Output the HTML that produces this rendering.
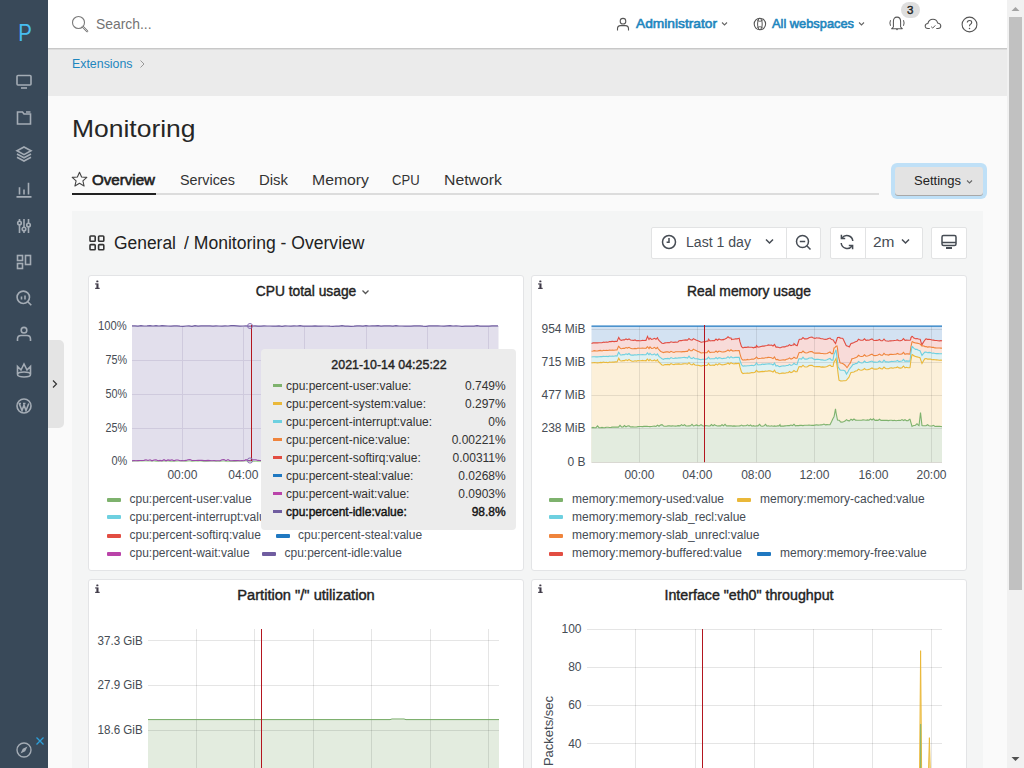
<!DOCTYPE html>
<html><head><meta charset="utf-8"><title>Monitoring</title>
<style>
html,body{margin:0;padding:0;width:1024px;height:768px;overflow:hidden;background:#fafafa;font-family:"Liberation Sans", sans-serif;}
.t{position:absolute;white-space:nowrap;line-height:1;font-family:"Liberation Sans", sans-serif;}
svg{overflow:visible}
</style></head><body>
<div style="position:absolute;left:48px;top:96px;width:960px;height:672px;background:#fafafa"></div><div style="position:absolute;left:48px;top:0px;width:960px;height:48px;background:#fff"></div><div style="position:absolute;left:48px;top:48px;width:960px;height:1px;background:#c8c8c8"></div><div style="position:absolute;left:48px;top:49px;width:960px;height:1px;background:#dcdcdc"></div><div style="position:absolute;left:48px;top:50px;width:960px;height:46px;background:#ebebeb"></div><div style="position:absolute;left:0px;top:0px;width:48px;height:768px;background:#394959"></div><svg style="position:absolute;left:71px;top:15px" width="18" height="18" viewBox="0 0 18 18"><circle cx="7.5" cy="7.5" r="6" fill="none" stroke="#7a7a7a" stroke-width="1.1"/><path d="M11.8 11.8 L16.2 16.2" stroke="#7a7a7a" stroke-width="2.2" stroke-linecap="round"/><path d="M11.8 11.8 L16.2 16.2" stroke="#fff" stroke-width="0.6" stroke-linecap="round"/></svg><div class="t" style="left:96px;transform-origin:left center;transform: scaleX(0.9245);top:15.90px;font-size:15px;color:#737373;font-weight:normal;">Search...</div><div class="t" style="left:24.9px;transform:translateX(-50%) scaleX(0.8492);top:21.08px;font-size:24px;color:#47bdf0;font-weight:normal;">P</div><svg style="position:absolute;left:616px;top:17px" width="14" height="14" viewBox="0 0 14 14"><circle cx="7" cy="4.2" r="2.8" fill="none" stroke="#555" stroke-width="1.1"/><path d="M1.5 13.5 V11.8 Q1.5 8.6 4.5 8.6 H9.5 Q12.5 8.6 12.5 11.8 V13.5" fill="none" stroke="#555" stroke-width="1.1"/></svg><div class="t" style="left:635.5px;transform-origin:left center;transform: scaleX(1.0577);top:17.20px;font-size:13px;color:#1e86be;font-weight:normal;;-webkit-text-stroke:0.6px #1e86be">Administrator</div><svg style="position:absolute;left:721px;top:21px" width="7" height="6" viewBox="0 0 7 6"><path d="M1 1.5 L3.5 4 L6 1.5" fill="none" stroke="#666" stroke-width="1.1"/></svg><svg style="position:absolute;left:752px;top:16px" width="16" height="16" viewBox="0 0 16 16"><circle cx="7.9" cy="8" r="5.7" fill="none" stroke="#555" stroke-width="1.1"/><ellipse cx="7.9" cy="8" rx="2.3" ry="5.7" fill="none" stroke="#555" stroke-width="1"/><path d="M5.2 4.6 Q7.9 6 10.6 4.6 M5.2 11.4 Q7.9 10 10.6 11.4" fill="none" stroke="#555" stroke-width="0.9"/></svg><div class="t" style="left:771.5px;transform-origin:left center;transform: scaleX(0.9867);top:17.20px;font-size:13px;color:#1e86be;font-weight:normal;;-webkit-text-stroke:0.6px #1e86be">All webspaces</div><svg style="position:absolute;left:858px;top:21px" width="7" height="6" viewBox="0 0 7 6"><path d="M1 1.5 L3.5 4 L6 1.5" fill="none" stroke="#666" stroke-width="1.1"/></svg><svg style="position:absolute;left:888px;top:15px" width="18" height="16" viewBox="0 0 18 16"><path d="M5.4 12 V6.6 Q5.4 2.1 9 2.1 Q12.6 2.1 12.6 6.6 V12 L14.3 13.7 H3.7 Z" fill="none" stroke="#555" stroke-width="1.05" stroke-linejoin="round"/><path d="M8.2 14.6 H9.8" stroke="#555" stroke-width="1"/><path d="M2.5 5.2 Q1.3 8 2.5 10.8 M15.5 5.2 Q16.7 8 15.5 10.8" fill="none" stroke="#555" stroke-width="1"/></svg><div style="position:absolute;left:901px;top:1.7px;width:19px;height:16.5px;background:#dedede;border-radius:8.5px"></div><div class="t" style="left:910.3px;transform:translateX(-50%);top:4.87px;font-size:11.5px;color:#222;font-weight:normal;;-webkit-text-stroke:0.4px #222">3</div><svg style="position:absolute;left:924px;top:18px" width="18" height="12" viewBox="0 0 18 12"><path d="M5.8 10.5 H4 Q1.2 10.5 1.2 8 Q1.2 5.6 3.9 5.4 Q4.8 1.2 9 1.2 Q12.6 1.2 13.6 4.9 Q16.8 5.3 16.8 8 Q16.8 10.5 14 10.5 H12.3" fill="none" stroke="#555" stroke-width="1.05"/><path d="M7.2 8.7 L8.7 10.1 L11.3 7.4" fill="none" stroke="#555" stroke-width="1"/></svg><svg style="position:absolute;left:961px;top:16px" width="17" height="17" viewBox="0 0 17 17"><circle cx="8.5" cy="8.5" r="7.4" fill="none" stroke="#555" stroke-width="1.1"/><path d="M6.3 6.6 Q6.3 4.5 8.5 4.5 Q10.7 4.5 10.7 6.4 Q10.7 7.6 9.5 8.2 Q8.5 8.8 8.5 10.2" fill="none" stroke="#555" stroke-width="1.1"/><circle cx="8.5" cy="12.4" r="0.75" fill="#555"/></svg><div class="t" style="left:71.6px;transform-origin:left center;transform: scaleX(0.9514);top:57.40px;font-size:13px;color:#1e86be;font-weight:normal;">Extensions</div><svg style="position:absolute;left:138px;top:59px" width="8" height="10" viewBox="0 0 8 10"><path d="M2.5 1.5 L6 5 L2.5 8.5" fill="none" stroke="#999" stroke-width="1"/></svg><div class="t" style="left:72.3px;transform-origin:left center;transform: scaleX(1.1021);top:117.18px;font-size:24px;color:#262626;font-weight:normal;">Monitoring</div><div style="position:absolute;left:72px;top:193px;width:807px;height:2px;background:#dcdcdc"></div><div style="position:absolute;left:72px;top:193px;width:84px;height:2px;background:#222"></div><svg style="position:absolute;left:71px;top:171px" width="17" height="17" viewBox="0 0 17 17"><path d="M8.5 1.2 L10.6 6 L15.8 6.4 L11.9 9.8 L13.1 15 L8.5 12.3 L3.9 15 L5.1 9.8 L1.2 6.4 L6.4 6 Z" fill="none" stroke="#444" stroke-width="1.1" stroke-linejoin="round"/></svg><div class="t" style="left:92.3px;transform-origin:left center;transform: scaleX(1.0795);top:172.95px;font-size:14px;color:#222;font-weight:normal;;-webkit-text-stroke:0.6px #222">Overview</div><div class="t" style="left:179.5px;transform-origin:left center;transform: scaleX(1.0244);top:172.95px;font-size:14px;color:#333;font-weight:normal;">Services</div><div class="t" style="left:258.5px;transform-origin:left center;transform: scaleX(1.0648);top:172.95px;font-size:14px;color:#333;font-weight:normal;">Disk</div><div class="t" style="left:311.6px;transform-origin:left center;transform: scaleX(1.1273);top:172.95px;font-size:14px;color:#333;font-weight:normal;">Memory</div><div class="t" style="left:391.9px;transform-origin:left center;transform: scaleX(0.9336);top:172.95px;font-size:14px;color:#333;font-weight:normal;">CPU</div><div class="t" style="left:444.4px;transform-origin:left center;transform: scaleX(1.1293);top:172.95px;font-size:14px;color:#333;font-weight:normal;">Network</div><div style="position:absolute;left:891px;top:163px;width:96px;height:36px;background:#bfe0f7;border-radius:6px"></div><div style="position:absolute;left:895px;top:167px;width:88px;height:28px;background:#e3e3e3;border-radius:3px;box-shadow:0 1px 0 #a8a8a8"></div><div class="t" style="left:914.3px;transform-origin:left center;transform: scaleX(1.0003);top:173.90px;font-size:13px;color:#222;font-weight:normal;">Settings</div><svg style="position:absolute;left:966px;top:179px" width="7" height="6" viewBox="0 0 7 6"><path d="M1 1.5 L3.5 4 L6 1.5" fill="none" stroke="#666" stroke-width="1.1"/></svg><div style="position:absolute;left:72px;top:211px;width:911px;height:557px;background:#f4f5f5"></div><svg style="position:absolute;left:89px;top:235px" width="16" height="16" viewBox="0 0 16 16"><g fill="none" stroke="#333" stroke-width="1.6"><rect x="1" y="1" width="5.2" height="5.2" rx="0.8"/><rect x="9.6" y="1" width="5.2" height="5.2" rx="0.8"/><rect x="1" y="9.6" width="5.2" height="5.2" rx="0.8"/><rect x="9.6" y="9.6" width="5.2" height="5.2" rx="0.8"/></g></svg><div class="t" style="left:114.3px;transform-origin:left center;transform: scaleX(0.9680);top:233.86px;font-size:18px;color:#222;font-weight:normal;">General</div><div class="t" style="left:184.3px;transform-origin:left center;transform: scaleX(0.9753);top:233.86px;font-size:18px;color:#222;font-weight:normal;">/ Monitoring - Overview</div><div style="position:absolute;left:651px;top:227px;width:170px;height:32px;background:#fff;border:1px solid #e2e3e4;border-radius:2px;box-sizing:border-box"></div><div style="position:absolute;left:786px;top:227px;width:1px;height:32px;background:#e2e3e4"></div><svg style="position:absolute;left:661px;top:234px" width="16" height="16" viewBox="0 0 16 16"><circle cx="8" cy="8" r="6.5" fill="none" stroke="#464c54" stroke-width="1.5"/><path d="M8 4 V8.3 L5.6 8.3" fill="none" stroke="#464c54" stroke-width="1.5"/></svg><div class="t" style="left:686px;transform-origin:left center;transform: scaleX(1.0060);top:234.75px;font-size:14px;color:#464c54;font-weight:normal;">Last 1 day</div><svg style="position:absolute;left:765px;top:238px" width="9" height="7" viewBox="0 0 9 7"><path d="M1 1.5 L4.5 5 L8 1.5" fill="none" stroke="#464c54" stroke-width="1.5"/></svg><svg style="position:absolute;left:795px;top:234px" width="17" height="17" viewBox="0 0 17 17"><circle cx="7.5" cy="7.5" r="6" fill="none" stroke="#464c54" stroke-width="1.5"/><path d="M4.8 7.5 H10.2 M11.8 11.8 L15.5 15.5" stroke="#464c54" stroke-width="1.5"/></svg><div style="position:absolute;left:830px;top:227px;width:93px;height:32px;background:#fff;border:1px solid #e2e3e4;border-radius:2px;box-sizing:border-box"></div><div style="position:absolute;left:865px;top:227px;width:1px;height:32px;background:#e2e3e4"></div><svg style="position:absolute;left:838px;top:233px;transform:scaleX(-1)" width="18" height="18" viewBox="0 0 18 18"><path d="M3.2 8 A6 6 0 0 1 14 5 M14.8 10 A6 6 0 0 1 4 13" fill="none" stroke="#464c54" stroke-width="1.5"/><path d="M14.6 1.8 V5.6 H10.8 M3.4 16.2 V12.4 H7.2" fill="none" stroke="#464c54" stroke-width="1.5"/></svg><div class="t" style="left:873px;transform-origin:left center;transform: scaleX(1.1052);top:234.75px;font-size:14px;color:#464c54;font-weight:normal;">2m</div><svg style="position:absolute;left:901px;top:238px" width="9" height="7" viewBox="0 0 9 7"><path d="M1 1.5 L4.5 5 L8 1.5" fill="none" stroke="#464c54" stroke-width="1.5"/></svg><div style="position:absolute;left:931px;top:227px;width:36px;height:32px;background:#fff;border:1px solid #e2e3e4;border-radius:2px;box-sizing:border-box"></div><svg style="position:absolute;left:940px;top:234px" width="18" height="17" viewBox="0 0 18 17"><rect x="2" y="1.5" width="14" height="10" rx="1.5" fill="none" stroke="#464c54" stroke-width="1.5"/><path d="M2 8.5 H16" stroke="#464c54" stroke-width="1.5"/><path d="M6 14 H12" stroke="#464c54" stroke-width="2"/></svg><div style="position:absolute;left:88px;top:275px;width:436px;height:296px;background:#fff;border:1px solid #e3e4e6;border-radius:3px;box-sizing:border-box"></div><div style="position:absolute;left:531px;top:275px;width:436px;height:296px;background:#fff;border:1px solid #e3e4e6;border-radius:3px;box-sizing:border-box"></div><div style="position:absolute;left:88px;top:579px;width:436px;height:200px;background:#fff;border:1px solid #e3e4e6;border-radius:3px;box-sizing:border-box"></div><div style="position:absolute;left:531px;top:579px;width:436px;height:200px;background:#fff;border:1px solid #e3e4e6;border-radius:3px;box-sizing:border-box"></div><svg style="position:absolute;left:94.0px;top:279px" width="7" height="11" viewBox="0 0 7 11"><g fill="#3f3a48"><rect x="2.3" y="1.4" width="2.1" height="1.9" rx="0.6"/><rect x="2.4" y="4.4" width="2.1" height="5.4"/><rect x="1.1" y="4.4" width="1.6" height="1.1"/><rect x="1.1" y="8.8" width="4.6" height="1.1"/></g></svg><svg style="position:absolute;left:537.0px;top:279px" width="7" height="11" viewBox="0 0 7 11"><g fill="#3f3a48"><rect x="2.3" y="1.4" width="2.1" height="1.9" rx="0.6"/><rect x="2.4" y="4.4" width="2.1" height="5.4"/><rect x="1.1" y="4.4" width="1.6" height="1.1"/><rect x="1.1" y="8.8" width="4.6" height="1.1"/></g></svg><svg style="position:absolute;left:94.0px;top:583px" width="7" height="11" viewBox="0 0 7 11"><g fill="#3f3a48"><rect x="2.3" y="1.4" width="2.1" height="1.9" rx="0.6"/><rect x="2.4" y="4.4" width="2.1" height="5.4"/><rect x="1.1" y="4.4" width="1.6" height="1.1"/><rect x="1.1" y="8.8" width="4.6" height="1.1"/></g></svg><svg style="position:absolute;left:537.0px;top:583px" width="7" height="11" viewBox="0 0 7 11"><g fill="#3f3a48"><rect x="2.3" y="1.4" width="2.1" height="1.9" rx="0.6"/><rect x="2.4" y="4.4" width="2.1" height="5.4"/><rect x="1.1" y="4.4" width="1.6" height="1.1"/><rect x="1.1" y="8.8" width="4.6" height="1.1"/></g></svg><div class="t" style="left:306px;transform:translateX(-50%) scaleX(0.9857);top:283.95px;font-size:14px;color:#222;font-weight:normal;margin-left:-0.3px;-webkit-text-stroke:0.4px #222">CPU total usage</div><svg style="position:absolute;left:361px;top:289px" width="9" height="7" viewBox="0 0 9 7"><path d="M1.5 1.5 L4.5 4.5 L7.5 1.5" fill="none" stroke="#555" stroke-width="1.3"/></svg><div class="t" style="left:749px;transform:translateX(-50%) scaleX(0.9898);top:283.95px;font-size:14px;color:#222;font-weight:normal;;-webkit-text-stroke:0.4px #222">Real memory usage</div><div class="t" style="left:305.9px;transform:translateX(-50%) scaleX(1.0469);top:587.95px;font-size:14px;color:#222;font-weight:normal;;-webkit-text-stroke:0.4px #222">Partition "/" utilization</div><div class="t" style="left:749.1px;transform:translateX(-50%) scaleX(1.0157);top:587.95px;font-size:14px;color:#222;font-weight:normal;;-webkit-text-stroke:0.4px #222">Interface "eth0" throughput</div><svg style="position:absolute;left:0;top:0" width="1024" height="768"><rect x="132" y="326" width="366.5" height="134.5" fill="#e2dfec"/><line x1="132" x2="498.5" y1="326.5" y2="326.5" stroke="#cfcadd" stroke-width="1"/><line x1="132" x2="498.5" y1="360.5" y2="360.5" stroke="#cfcadd" stroke-width="1"/><line x1="132" x2="498.5" y1="394.5" y2="394.5" stroke="#cfcadd" stroke-width="1"/><line x1="132" x2="498.5" y1="428.5" y2="428.5" stroke="#cfcadd" stroke-width="1"/><line x1="132" x2="498.5" y1="460.5" y2="460.5" stroke="#cfcadd" stroke-width="1"/><line x1="182.5" x2="182.5" y1="326" y2="461" stroke="#cfcadd" stroke-width="1"/><line x1="243.5" x2="243.5" y1="326" y2="461" stroke="#cfcadd" stroke-width="1"/><line x1="304.5" x2="304.5" y1="326" y2="461" stroke="#cfcadd" stroke-width="1"/><line x1="366.5" x2="366.5" y1="326" y2="461" stroke="#cfcadd" stroke-width="1"/><line x1="427.5" x2="427.5" y1="326" y2="461" stroke="#cfcadd" stroke-width="1"/><line x1="488.5" x2="488.5" y1="326" y2="461" stroke="#cfcadd" stroke-width="1"/><polyline points="132,325.9 135,325.8 138,326.1 141,325.7 144,326.0 147,325.9 150,325.7 153,326.0 156,325.7 159,326.0 162,325.7 165,325.8 168,326.0 171,326.2 174,325.8 177,325.8 180,326.1 183,326.3 186,326.0 189,325.9 192,326.3 195,325.7 198,326.2 201,325.9 204,325.8 207,325.8 210,325.9 213,326.2 216,325.8 219,326.0 222,326.1 225,325.9 228,326.0 231,325.7 234,325.7 237,325.8 240,326.1 243,326.0 246,325.9 249,326.1 252,326.0 255,325.9 258,326.2 261,326.1 264,325.8 267,326.0 270,326.0 273,326.2 276,326.1 279,325.9 282,326.3 285,325.8 288,326.0 291,326.2 294,325.8 297,326.0 300,325.7 303,326.1 306,326.2 309,326.0 312,326.2 315,325.9 318,326.1 321,326.1 324,326.0 327,326.0 330,326.2 333,326.3 336,326.0 339,326.1 342,325.7 345,326.1 348,326.1 351,326.3 354,326.2 357,325.9 360,325.9 363,326.1 366,325.7 369,326.0 372,325.8 375,325.8 378,325.7 381,326.2 384,325.8 387,325.8 390,325.9 393,326.2 396,325.7 399,326.0 402,326.0 405,326.2 408,326.2 411,326.2 414,325.9 417,325.9 420,325.9 423,326.2 426,326.3 429,325.8 432,325.8 435,325.8 438,325.8 441,326.0 444,326.1 447,325.9 450,325.7 453,326.0 456,325.9 459,326.0 462,326.3 465,326.1 468,326.0 471,326.1 474,326.1 477,325.7 480,326.2 483,326.2 486,326.2 489,326.2 492,325.9 495,325.9 498,325.8" fill="none" stroke="#705da0" stroke-width="1.2"/><polyline points="132,461.4 134,461.0 136,461.0 138,461.1 140,461.1 142,461.2 144,461.0 146,461.0 148,461.1 150,461.1 152,461.2 154,461.0 156,461.5 158,461.4 160,461.1 162,461.2 164,461.2 166,461.2 168,461.1 170,461.5 172,461.6 174,461.3 176,461.3 178,461.1 180,461.1 182,461.2 184,461.2 186,461.5 188,461.1 190,461.0 192,461.6 194,461.3 196,461.1 198,461.3 200,461.0 202,461.3 204,461.6 206,461.5 208,461.4 210,461.2 212,461.2 214,461.1 216,461.5 218,461.3 220,461.5 222,461.2 224,461.1 226,461.5 228,461.6 230,461.5 232,461.5 234,461.5 236,461.4 238,461.1 240,461.3 242,461.2 244,461.0 246,461.0 248,461.2 250,461.2 252,461.4 254,461.6 256,461.3 258,461.6 260,461.6 262,461.6 264,461.2 266,461.1 268,461.1 270,461.1 272,461.1 274,461.4 276,461.5 278,461.5 280,461.3 282,461.4 284,461.5 286,461.1 288,461.4 290,461.5 292,461.5 294,461.5 296,461.3 298,461.1 300,461.5 302,461.2 304,461.5 306,461.6 308,461.2 310,461.2 312,461.6 314,461.4 316,461.1 318,461.1 320,461.1 322,461.5 324,461.5 326,461.1 328,461.5 330,461.6 332,461.4 334,461.2 336,461.3 338,461.1 340,461.0 342,461.6 344,461.4 346,461.3 348,461.6 350,461.3 352,461.5 354,461.5 356,461.1 358,461.2 360,461.2 362,461.1 364,461.4 366,461.2 368,461.3 370,461.1 372,461.5 374,461.2 376,461.3 378,461.4 380,461.5 382,461.3 384,461.6 386,461.3 388,461.3 390,461.3 392,461.0 394,461.3 396,461.1 398,461.0 400,461.5 402,461.1 404,461.3 406,461.4 408,461.3 410,461.2 412,461.3 414,461.3 416,461.5 418,461.1 420,461.3 422,461.1 424,461.2 426,461.5 428,461.3 430,461.3 432,461.5 434,461.5 436,461.3 438,461.4 440,461.3 442,461.3 444,461.4 446,461.3 448,461.3 450,461.3 452,461.6 454,461.4 456,461.5 458,461.6 460,461.2 462,461.3 464,461.6 466,461.5 468,461.1 470,461.1 472,461.3 474,461.0 476,461.1 478,461.0 480,461.4 482,461.5 484,461.5 486,461.1 488,461.4 490,461.4 492,461.1 494,461.5 496,461.6 498,461.1" fill="none" stroke="#a8d59c" stroke-width="1"/><polyline points="132,460.8 134,460.6 136,460.8 138,460.6 140,460.5 142,460.5 144,460.4 146,459.8 148,460.5 150,459.8 152,460.8 154,460.0 156,459.7 158,460.7 160,460.4 162,460.8 164,459.7 166,460.8 168,459.9 170,460.4 172,459.8 174,460.8 176,460.0 178,460.0 180,460.8 182,460.5 184,460.8 186,460.4 188,459.7 190,459.6 192,460.5 194,460.5 196,460.5 198,460.4 200,460.4 202,460.4 204,460.6 206,460.6 208,460.4 210,460.6 212,460.8 214,460.6 216,460.8 218,460.8 220,460.7 222,459.7 224,459.6 226,460.7 228,459.6 230,460.8 232,460.7 234,460.5 236,460.6 238,460.6 240,460.8 242,460.6 244,460.8 246,459.7 248,460.5 250,460.6 252,459.8 254,459.7 256,459.7 258,460.4 260,460.5 262,460.6 264,460.7 266,460.8 268,460.5 270,460.4 272,459.9 274,460.8 276,460.7 278,460.0 280,460.6 282,460.8 284,460.8 286,460.8 288,460.7 290,459.6 292,459.7 294,460.8 296,460.7 298,460.7 300,460.4 302,460.7 304,460.6 306,460.4 308,459.7 310,460.5 312,460.5 314,460.8 316,460.5 318,460.7 320,460.7 322,459.6 324,460.5 326,460.5 328,459.6 330,460.5 332,460.7 334,460.5 336,460.6 338,460.4 340,460.4 342,460.0 344,460.6 346,460.8 348,460.5 350,460.8 352,459.8 354,460.6 356,460.4 358,460.6 360,460.7 362,460.8 364,459.6 366,460.6 368,459.7 370,460.5 372,460.0 374,460.7 376,460.4 378,460.7 380,460.5 382,460.5 384,460.6 386,460.6 388,459.6 390,460.8 392,460.8 394,460.5 396,460.4 398,460.8 400,460.8 402,460.8 404,460.6 406,460.4 408,460.6 410,460.7 412,460.4 414,460.4 416,460.5 418,460.7 420,460.5 422,460.5 424,460.5 426,460.4 428,460.8 430,460.5 432,460.8 434,460.4 436,460.4 438,460.4 440,460.5 442,460.8 444,460.6 446,460.6 448,459.7 450,460.5 452,460.4 454,460.7 456,460.5 458,460.5 460,460.6 462,460.8 464,459.6 466,460.7 468,460.6 470,460.4 472,460.8 474,460.8 476,459.7 478,460.4 480,460.7 482,460.7 484,460.7 486,459.8 488,460.7 490,460.8 492,459.7 494,460.5 496,459.9 498,460.4" fill="none" stroke="#9a4aa8" stroke-width="1.1"/><line x1="251.5" x2="251.5" y1="325" y2="461" stroke="#b3161f" stroke-width="1"/><circle cx="250" cy="326" r="2.5" fill="none" stroke="#8a6fb3" stroke-width="1"/><circle cx="250" cy="460.5" r="2.6" fill="none" stroke="#8a6fb3" stroke-width="1"/></svg><div class="t" style="right:897px;transform-origin:right center;transform: scaleX(0.9348);top:320.14px;font-size:12px;color:#464c54;font-weight:normal;">100%</div><div class="t" style="right:897px;transform-origin:right center;transform: scaleX(0.8988);top:354.14px;font-size:12px;color:#464c54;font-weight:normal;">75%</div><div class="t" style="right:897px;transform-origin:right center;transform: scaleX(0.8988);top:388.34px;font-size:12px;color:#464c54;font-weight:normal;">50%</div><div class="t" style="right:897px;transform-origin:right center;transform: scaleX(0.8988);top:422.34px;font-size:12px;color:#464c54;font-weight:normal;">25%</div><div class="t" style="right:897px;transform-origin:right center;transform: scaleX(0.9110);top:454.64px;font-size:12px;color:#464c54;font-weight:normal;">0%</div><div class="t" style="left:182.4px;transform:translateX(-50%);top:468.84px;font-size:12px;color:#464c54;font-weight:normal;">00:00</div><div class="t" style="left:243.3px;transform:translateX(-50%);top:468.84px;font-size:12px;color:#464c54;font-weight:normal;">04:00</div><div style="position:absolute;left:107px;top:498.1px;width:14px;height:4px;background:#7eb26d;border-radius:1px"></div><div class="t" style="left:129.5px;transform-origin:left center;top:493.44px;font-size:12px;color:#464c54;font-weight:normal;">cpu:percent-user:value</div><div style="position:absolute;left:107px;top:515.3px;width:14px;height:4px;background:#6ed0e0;border-radius:1px"></div><div class="t" style="left:129.5px;transform-origin:left center;top:510.64px;font-size:12px;color:#464c54;font-weight:normal;">cpu:percent-interrupt:value</div><div style="position:absolute;left:107px;top:534.0px;width:14px;height:4px;background:#e24d42;border-radius:1px"></div><div class="t" style="left:129.5px;transform-origin:left center;top:529.34px;font-size:12px;color:#464c54;font-weight:normal;">cpu:percent-softirq:value</div><div style="position:absolute;left:275.5px;top:534.0px;width:14px;height:4px;background:#1f78c1;border-radius:1px"></div><div class="t" style="left:298.0px;transform-origin:left center;top:529.34px;font-size:12px;color:#464c54;font-weight:normal;">cpu:percent-steal:value</div><div style="position:absolute;left:107px;top:551.8px;width:14px;height:4px;background:#ba43a9;border-radius:1px"></div><div class="t" style="left:129.5px;transform-origin:left center;top:547.14px;font-size:12px;color:#464c54;font-weight:normal;">cpu:percent-wait:value</div><div style="position:absolute;left:262px;top:551.8px;width:14px;height:4px;background:#705da0;border-radius:1px"></div><div class="t" style="left:284.5px;transform-origin:left center;top:547.14px;font-size:12px;color:#464c54;font-weight:normal;">cpu:percent-idle:value</div><div style="position:absolute;left:261px;top:349px;width:255px;height:181px;background:#ececec;border-radius:4px"></div><div class="t" style="left:388.7px;transform:translateX(-50%) scaleX(0.9551);top:358.10px;font-size:13px;color:#222;font-weight:normal;;-webkit-text-stroke:0.4px #222">2021-10-14 04:25:22</div><div style="position:absolute;left:273px;top:384.2px;width:9px;height:3px;background:#7eb26d"></div><div class="t" style="left:286px;transform-origin:left center;top:380.04px;font-size:12px;color:#333;font-weight:normal;">cpu:percent-user:value:</div><div class="t" style="right:518.3px;transform-origin:right center;top:380.04px;font-size:12px;color:#333;font-weight:normal;">0.749%</div><div style="position:absolute;left:273px;top:402.2px;width:9px;height:3px;background:#eab839"></div><div class="t" style="left:286px;transform-origin:left center;top:398.04px;font-size:12px;color:#333;font-weight:normal;">cpu:percent-system:value:</div><div class="t" style="right:518.3px;transform-origin:right center;top:398.04px;font-size:12px;color:#333;font-weight:normal;">0.297%</div><div style="position:absolute;left:273px;top:420.2px;width:9px;height:3px;background:#6ed0e0"></div><div class="t" style="left:286px;transform-origin:left center;top:416.04px;font-size:12px;color:#333;font-weight:normal;">cpu:percent-interrupt:value:</div><div class="t" style="right:518.3px;transform-origin:right center;top:416.04px;font-size:12px;color:#333;font-weight:normal;">0%</div><div style="position:absolute;left:273px;top:438.2px;width:9px;height:3px;background:#ef843c"></div><div class="t" style="left:286px;transform-origin:left center;top:434.04px;font-size:12px;color:#333;font-weight:normal;">cpu:percent-nice:value:</div><div class="t" style="right:518.3px;transform-origin:right center;top:434.04px;font-size:12px;color:#333;font-weight:normal;">0.00221%</div><div style="position:absolute;left:273px;top:456.2px;width:9px;height:3px;background:#e24d42"></div><div class="t" style="left:286px;transform-origin:left center;top:452.04px;font-size:12px;color:#333;font-weight:normal;">cpu:percent-softirq:value:</div><div class="t" style="right:518.3px;transform-origin:right center;top:452.04px;font-size:12px;color:#333;font-weight:normal;">0.00311%</div><div style="position:absolute;left:273px;top:474.2px;width:9px;height:3px;background:#1f78c1"></div><div class="t" style="left:286px;transform-origin:left center;top:470.04px;font-size:12px;color:#333;font-weight:normal;">cpu:percent-steal:value:</div><div class="t" style="right:518.3px;transform-origin:right center;top:470.04px;font-size:12px;color:#333;font-weight:normal;">0.0268%</div><div style="position:absolute;left:273px;top:492.2px;width:9px;height:3px;background:#ba43a9"></div><div class="t" style="left:286px;transform-origin:left center;top:488.04px;font-size:12px;color:#333;font-weight:normal;">cpu:percent-wait:value:</div><div class="t" style="right:518.3px;transform-origin:right center;top:488.04px;font-size:12px;color:#333;font-weight:normal;">0.0903%</div><div style="position:absolute;left:273px;top:510.20000000000005px;width:9px;height:3px;background:#705da0"></div><div class="t" style="left:286px;transform-origin:left center;top:506.04px;font-size:12px;color:#111;font-weight:normal;;-webkit-text-stroke:0.4px #111">cpu:percent-idle:value:</div><div class="t" style="right:518.3px;transform-origin:right center;top:506.04px;font-size:12px;color:#111;font-weight:normal;;-webkit-text-stroke:0.4px #111">98.8%</div><svg style="position:absolute;left:0;top:0" width="1024" height="768"><rect x="591.5" y="326" width="350.5" height="136.2" fill="#d3e2f2"/><polygon points="591.5,343.4 593.0,342.9 594.5,342.9 596.0,342.9 597.5,342.9 599.0,342.7 600.5,342.7 602.0,342.7 603.5,342.1 604.0,342.4 605.0,342.3 606.5,342.1 608.0,342.3 609.5,341.6 611.0,341.6 612.0,341.4 612.5,341.3 614.0,341.6 615.5,341.4 617.0,341.5 618.5,337.9 618.7,337.4 620.0,339.6 620.5,340.1 621.5,340.4 623.0,339.7 624.5,339.9 626.0,338.9 627.5,339.7 629.0,338.9 630.5,340.0 632.0,340.3 633.5,340.4 635.0,339.9 636.5,340.7 638.0,340.6 639.5,340.7 641.0,340.8 642.5,340.3 644.0,340.5 645.5,340.3 646.0,340.4 647.0,337.6 647.5,336.4 648.5,338.8 649.0,339.5 650.0,338.0 651.5,339.4 653.0,339.1 654.5,338.3 656.0,339.3 657.5,337.7 658.0,339.0 659.0,340.3 660.5,341.9 662.0,343.2 663.5,343.5 665.0,342.9 666.5,342.7 668.0,342.6 669.5,342.8 671.0,341.8 672.5,342.3 674.0,342.4 675.5,342.0 677.0,342.2 678.0,342.1 678.5,341.3 680.0,340.6 681.5,340.6 683.0,340.3 684.5,340.1 686.0,339.9 687.5,340.2 689.0,338.5 690.5,339.8 692.0,340.2 693.5,338.6 695.0,339.6 696.5,340.3 698.0,340.8 699.5,341.4 701.0,342.3 701.7,342.2 702.5,342.0 704.0,341.8 705.5,341.6 707.0,341.1 708.0,341.1 708.5,339.2 710.0,340.9 711.5,340.8 713.0,340.5 714.5,340.7 716.0,339.1 717.5,340.2 719.0,339.0 720.5,339.7 722.0,339.9 723.4,339.5 723.5,339.8 725.0,339.1 726.5,338.3 728.0,336.8 729.2,337.7 729.5,338.0 731.0,338.0 731.6,339.6 732.5,339.3 734.0,339.2 735.5,338.8 737.0,338.9 738.5,338.5 739.2,338.3 740.0,341.9 741.5,346.7 743.0,347.9 744.5,347.2 746.0,347.4 747.5,347.1 748.0,346.9 749.0,347.3 750.5,347.2 752.0,347.3 753.5,347.8 755.0,347.2 756.0,347.5 756.5,345.5 758.0,347.1 759.5,346.9 761.0,346.5 762.5,346.1 764.0,346.1 765.5,345.7 767.0,345.5 768.5,344.9 770.0,345.2 771.5,345.1 773.0,346.0 774.5,344.5 776.0,347.1 777.5,347.0 779.0,347.5 779.6,347.7 780.5,347.7 782.0,347.0 783.5,346.8 785.0,346.9 786.5,346.1 788.0,346.0 789.5,344.7 791.0,345.7 792.5,345.0 793.7,345.0 794.0,343.5 795.5,345.0 797.0,345.7 797.2,345.7 798.5,341.5 799.2,339.4 800.0,339.3 801.5,339.2 803.0,337.6 804.5,338.9 806.0,338.9 807.5,338.7 809.0,337.7 810.5,337.2 812.0,337.0 813.5,338.1 815.0,338.4 816.5,337.8 817.0,338.0 818.0,338.0 819.5,338.1 821.0,338.7 822.5,338.8 824.0,339.2 825.5,339.4 827.0,339.1 828.5,338.4 830.0,338.0 831.5,339.6 833.0,339.8 833.2,340.0 834.5,342.1 835.6,343.5 836.0,342.2 837.5,337.5 838.0,337.5 839.0,337.4 840.5,338.1 842.0,338.3 842.8,338.4 843.5,339.7 845.0,342.9 846.0,345.1 846.5,345.7 848.0,346.3 849.3,346.9 849.5,346.4 851.0,343.5 852.5,343.1 854.0,342.6 855.5,341.8 857.0,341.3 858.5,339.3 860.0,340.0 860.6,340.1 861.5,340.2 863.0,340.2 864.5,338.8 866.0,340.3 867.5,340.1 869.0,340.2 870.5,339.5 872.0,338.9 873.5,340.2 875.0,340.5 876.5,340.4 878.0,340.3 879.5,339.5 881.0,340.8 882.5,340.8 884.0,339.1 885.5,340.8 887.0,341.0 888.5,341.3 890.0,340.8 891.2,340.9 891.5,340.8 893.0,340.8 894.5,340.5 896.0,340.3 897.5,339.9 899.0,340.8 900.5,340.6 902.0,340.2 903.5,338.6 905.0,340.4 906.5,340.1 908.0,340.2 909.5,340.2 910.5,340.1 911.0,337.6 912.0,336.4 912.5,336.5 913.7,338.0 914.0,338.1 915.5,338.7 917.0,338.5 918.5,339.0 920.0,339.2 920.2,339.3 921.5,343.9 921.8,345.0 923.0,342.9 924.5,340.5 925.8,339.1 926.0,338.8 927.5,339.4 929.0,339.2 930.5,339.5 932.0,340.0 933.5,340.1 935.0,340.5 936.5,340.5 938.0,340.8 939.5,340.9 941.0,340.6 942.0,341.1 942.0,462.2 591.5,462.2" fill="#f8dbd9"/><polygon points="591.5,351.3 593.0,351.0 594.5,350.6 596.0,351.0 597.5,351.0 599.0,350.6 600.5,350.4 602.0,350.9 603.5,350.3 605.0,350.5 606.5,350.2 608.0,350.5 609.5,350.0 611.0,350.3 612.5,350.0 614.0,350.2 615.5,350.0 617.0,350.0 618.5,346.4 618.7,346.3 620.0,348.0 620.5,348.5 621.5,348.7 623.0,348.3 624.5,348.4 626.0,347.5 627.5,348.1 629.0,347.3 630.5,348.3 632.0,348.7 633.5,348.7 635.0,348.4 636.5,348.7 638.0,348.0 639.5,348.2 641.0,348.2 642.5,348.1 644.0,348.2 645.5,348.2 646.0,348.3 647.0,347.1 647.5,346.7 648.5,348.0 649.0,348.5 650.0,346.9 651.5,348.5 653.0,348.3 654.5,347.4 656.0,348.7 657.5,347.4 658.0,348.5 659.0,349.7 660.5,351.2 662.0,352.1 663.5,352.6 665.0,352.1 666.5,351.9 668.0,351.9 669.5,352.4 671.0,351.3 672.5,351.9 674.0,352.4 675.5,351.7 677.0,351.8 678.5,351.7 680.0,351.8 681.5,351.9 683.0,351.6 684.5,351.5 685.0,351.7 686.0,351.2 687.5,351.4 689.0,349.3 690.5,350.8 692.0,350.7 693.5,349.2 695.0,350.1 696.5,350.7 698.0,351.4 699.5,352.1 701.0,353.0 701.7,353.0 702.5,352.7 704.0,352.7 705.5,352.7 707.0,352.6 708.5,350.7 710.0,352.6 711.5,352.2 713.0,352.2 714.5,352.3 716.0,351.0 717.5,352.2 719.0,351.0 720.5,351.4 722.0,352.0 723.5,351.9 725.0,351.7 726.5,351.1 728.0,350.0 729.5,351.1 731.0,349.8 732.5,350.9 734.0,351.0 735.5,350.5 737.0,350.8 738.5,350.6 739.2,350.5 740.0,354.1 741.5,358.8 743.0,360.2 744.5,359.8 746.0,360.0 747.5,359.4 748.0,359.7 749.0,359.8 750.5,359.5 752.0,359.0 753.5,359.3 755.0,358.6 756.5,357.0 758.0,358.7 759.5,358.5 761.0,358.3 762.5,358.0 764.0,358.2 765.5,357.7 767.0,357.6 768.5,357.4 770.0,357.5 771.5,357.7 773.0,358.6 774.5,357.0 776.0,359.7 777.5,359.4 779.0,360.2 779.6,360.3 780.5,360.2 782.0,360.0 783.5,359.8 785.0,360.1 786.5,359.3 788.0,359.1 789.5,357.9 791.0,359.1 792.5,358.6 794.0,357.2 795.5,358.2 797.0,358.2 798.5,354.1 799.2,352.5 800.0,352.5 801.5,352.6 803.0,351.0 804.5,352.5 806.0,353.0 807.5,352.7 809.0,352.0 810.5,351.5 812.0,351.6 813.5,352.7 815.0,353.1 816.5,353.0 818.0,353.1 819.5,353.1 821.0,353.5 822.5,353.5 824.0,353.8 825.5,353.8 827.0,353.5 828.5,352.7 830.0,352.0 831.5,353.6 833.0,353.6 834.0,348.0 834.5,348.0 836.0,346.3 837.0,345.9 837.5,348.4 838.5,356.9 839.0,358.6 840.0,362.7 840.5,363.1 842.0,363.3 843.5,364.0 845.0,365.2 846.5,367.0 847.0,367.6 848.0,366.2 849.5,363.8 850.0,363.5 851.0,361.2 852.0,358.7 852.5,358.8 854.0,358.3 855.5,357.7 857.0,357.1 858.5,355.3 860.0,356.2 861.5,356.5 863.0,356.2 864.5,354.8 866.0,356.2 867.5,356.0 869.0,355.6 870.5,354.8 872.0,354.2 873.5,355.5 875.0,355.6 876.5,355.5 878.0,355.0 879.5,354.1 881.0,355.3 882.5,355.3 884.0,353.3 885.5,354.8 887.0,354.8 888.5,355.1 890.0,354.4 891.5,354.3 893.0,354.5 894.5,354.3 896.0,354.2 897.5,353.4 899.0,354.2 900.5,354.2 902.0,353.9 903.5,352.3 905.0,354.3 906.5,353.8 908.0,353.9 909.5,354.1 910.0,353.9 911.0,346.6 912.0,341.8 912.5,341.6 914.0,342.6 915.0,342.7 915.5,343.0 917.0,343.1 918.5,343.5 920.0,343.9 921.5,345.5 922.0,345.9 923.0,345.8 924.5,346.3 925.0,346.7 926.0,346.5 927.5,347.1 929.0,346.9 930.5,347.0 932.0,347.4 933.5,347.4 935.0,347.9 936.5,348.0 938.0,348.0 939.5,348.0 941.0,348.1 942.0,348.3 942.0,462.2 591.5,462.2" fill="#fbe5da"/><polygon points="591.5,357.0 593.0,356.8 594.5,356.7 596.0,356.9 597.5,356.9 599.0,356.7 600.5,356.5 602.0,356.6 603.5,356.2 605.0,356.5 606.5,356.3 608.0,356.6 609.5,356.0 611.0,356.2 612.5,356.0 614.0,356.2 615.5,355.7 617.0,356.0 618.5,352.5 618.7,352.2 620.0,354.3 620.5,354.9 621.5,355.0 623.0,354.6 624.5,354.7 626.0,353.8 627.5,354.5 629.0,353.5 630.5,354.9 632.0,355.1 633.5,355.1 635.0,354.7 636.5,355.0 638.0,354.6 639.5,354.7 641.0,354.8 642.5,354.6 644.0,354.8 645.5,354.7 646.0,354.7 647.0,353.3 647.5,352.9 648.5,354.3 649.0,354.7 650.0,353.3 651.5,354.8 653.0,354.8 654.5,353.9 656.0,355.3 657.5,353.9 658.0,354.9 659.0,356.3 660.5,357.6 662.0,358.8 663.5,359.3 665.0,358.6 666.5,358.6 668.0,358.4 669.5,358.9 671.0,357.6 672.5,358.3 674.0,358.5 675.5,357.9 677.0,358.2 678.5,357.9 680.0,357.9 681.5,357.8 683.0,357.5 684.5,357.4 685.0,357.6 686.0,357.5 687.5,358.1 689.0,356.2 690.5,358.1 692.0,358.6 693.5,357.4 695.0,358.8 696.5,358.7 698.0,358.9 699.5,359.4 701.0,359.8 701.7,359.6 702.5,359.2 704.0,359.3 705.5,359.3 707.0,358.9 708.5,357.2 710.0,359.0 711.5,358.7 713.0,358.8 714.5,358.8 716.0,357.5 717.5,358.7 719.0,357.6 720.5,358.0 722.0,358.7 723.5,358.4 725.0,358.2 726.5,358.0 728.0,356.7 729.5,358.1 731.0,356.7 732.5,357.7 734.0,357.6 735.5,357.2 737.0,357.4 738.5,357.4 739.2,357.4 740.0,360.6 741.5,364.8 743.0,366.2 744.5,365.9 746.0,366.0 747.5,365.7 749.0,365.8 750.5,365.5 752.0,365.2 753.5,365.7 755.0,365.0 756.5,363.0 758.0,365.0 759.5,364.7 761.0,364.6 762.5,364.1 764.0,364.4 765.5,364.1 767.0,364.0 768.5,363.7 770.0,363.9 771.5,364.0 773.0,365.0 774.5,363.1 776.0,366.0 777.5,365.5 779.0,366.4 779.6,366.6 780.5,366.4 782.0,366.0 783.5,365.8 785.0,366.0 786.5,365.5 788.0,365.5 789.5,364.4 791.0,365.5 792.5,364.9 794.0,363.3 795.5,364.5 797.0,364.7 798.5,359.9 799.0,358.8 800.0,358.7 801.5,359.1 803.0,357.2 804.5,359.0 806.0,359.1 807.5,359.0 809.0,358.0 810.5,358.0 812.0,357.9 813.5,359.0 815.0,359.6 816.5,359.4 818.0,359.4 819.5,359.5 821.0,359.9 822.5,359.9 824.0,360.2 825.5,360.3 827.0,359.7 828.5,359.0 830.0,358.5 831.5,360.1 833.0,360.1 834.0,354.5 834.5,353.6 836.0,349.7 837.5,361.4 838.0,366.8 839.0,368.2 840.0,369.9 840.5,370.1 842.0,370.2 843.5,370.3 845.0,370.9 846.5,374.1 848.0,371.7 849.5,368.8 850.0,368.4 851.0,367.2 852.5,365.1 853.0,364.2 854.0,364.5 855.5,363.6 857.0,363.5 858.5,361.5 860.0,362.5 861.5,363.0 863.0,362.7 864.5,361.1 866.0,362.5 867.5,362.5 869.0,362.0 870.5,361.5 872.0,361.0 873.5,362.1 875.0,362.1 876.5,362.3 878.0,362.0 879.5,361.0 881.0,362.0 882.5,362.2 884.0,360.2 885.5,361.9 887.0,361.7 888.5,362.1 890.0,361.7 891.5,361.4 893.0,361.5 894.5,361.3 896.0,361.2 897.5,360.5 899.0,361.6 900.5,361.3 902.0,361.0 903.5,359.3 905.0,361.3 906.5,360.9 908.0,361.1 909.5,361.0 910.0,361.1 911.0,352.4 912.0,346.5 912.5,346.8 914.0,348.4 915.0,349.0 915.5,349.4 917.0,349.4 918.5,350.2 920.0,350.7 921.5,354.2 922.0,355.4 923.0,354.2 924.5,352.5 925.0,352.1 926.0,352.0 927.5,352.7 929.0,352.4 930.5,352.6 932.0,353.2 933.5,353.0 935.0,353.5 936.5,353.6 938.0,353.5 939.5,353.8 941.0,353.7 942.0,353.8 942.0,462.2 591.5,462.2" fill="#dff1f2"/><polygon points="591.5,362.9 593.0,362.8 594.5,362.5 596.0,362.7 597.5,362.9 599.0,362.7 600.5,362.4 602.0,362.6 603.5,362.1 605.0,362.5 606.5,362.4 608.0,362.7 609.5,362.1 611.0,362.3 612.5,362.1 614.0,362.1 615.5,361.9 617.0,362.0 618.5,358.8 618.7,358.3 620.0,360.3 620.5,360.8 621.5,361.0 623.0,360.6 624.5,360.6 626.0,359.8 627.5,360.6 629.0,359.5 630.5,360.6 632.0,361.2 633.5,361.2 635.0,360.8 636.5,361.1 638.0,360.6 639.5,360.8 641.0,360.8 642.5,360.4 644.0,360.8 645.5,360.5 646.0,360.9 647.0,359.4 647.5,359.0 648.5,360.5 649.0,360.8 650.0,359.4 651.5,360.8 653.0,360.7 654.5,360.0 656.0,361.1 657.5,359.7 658.0,361.0 659.0,362.1 660.5,363.7 662.0,365.0 663.5,365.2 665.0,364.6 666.5,364.6 668.0,364.4 669.5,364.8 671.0,363.6 672.5,364.3 674.0,364.6 675.5,364.1 677.0,364.1 678.5,363.9 680.0,364.1 681.5,364.2 683.0,363.9 684.5,363.8 685.0,363.8 686.0,363.7 687.5,364.2 689.0,362.7 690.5,364.4 692.0,364.9 693.5,363.8 695.0,365.0 696.5,365.2 698.0,365.3 699.5,365.6 701.0,366.0 701.7,365.9 702.5,365.6 704.0,365.5 705.5,365.5 707.0,365.5 708.5,363.5 710.0,365.4 711.5,365.2 713.0,365.1 714.5,365.4 716.0,363.9 717.5,365.1 719.0,363.7 720.5,364.3 722.0,364.9 723.5,364.7 725.0,364.4 726.5,364.1 728.0,363.0 729.5,364.2 731.0,362.7 732.5,363.6 734.0,364.0 735.5,363.4 737.0,363.6 738.5,363.3 739.2,363.4 740.0,367.2 741.5,372.1 743.0,373.6 744.5,373.2 746.0,373.3 747.5,373.0 749.0,373.2 750.5,372.9 752.0,372.5 753.5,372.8 755.0,372.2 756.5,370.4 758.0,371.9 759.5,371.9 761.0,371.6 762.5,371.4 764.0,371.6 765.5,371.1 767.0,371.2 768.5,370.9 770.0,370.9 771.5,371.2 773.0,372.0 774.5,370.3 776.0,372.8 777.5,372.7 779.0,373.4 779.6,373.7 780.5,373.5 782.0,373.1 783.5,373.1 785.0,373.2 786.5,372.7 788.0,372.8 789.5,371.5 791.0,372.6 792.5,372.0 794.0,370.6 795.5,371.8 797.0,371.8 798.5,367.9 799.0,366.7 800.0,366.6 801.5,366.9 803.0,365.2 804.5,366.8 806.0,367.0 807.5,366.8 809.0,365.6 810.5,365.3 812.0,365.4 813.5,366.3 815.0,366.7 816.5,366.5 818.0,366.6 819.5,366.6 821.0,367.1 822.5,366.9 824.0,367.1 825.5,367.0 827.0,366.5 828.5,365.8 830.0,365.1 831.5,366.5 833.0,366.5 834.0,361.9 834.5,361.5 836.0,358.6 837.5,368.3 838.0,372.9 839.0,380.2 840.5,380.9 842.0,381.0 843.5,380.7 845.0,380.8 846.0,380.5 846.5,380.1 848.0,378.3 849.0,377.2 849.5,375.9 851.0,372.4 852.5,372.2 854.0,372.0 855.5,371.0 857.0,370.7 858.5,369.1 860.0,370.0 861.5,370.2 863.0,369.8 864.5,368.5 866.0,369.8 867.5,369.7 869.0,369.4 870.5,368.7 872.0,368.0 873.5,369.0 875.0,369.1 876.5,369.1 878.0,368.8 879.5,367.7 881.0,368.8 882.5,368.9 884.0,367.0 885.5,368.5 887.0,368.7 888.5,368.7 890.0,368.0 891.5,367.9 893.0,368.2 894.5,367.8 896.0,367.8 897.5,367.0 899.0,367.9 900.5,368.1 902.0,367.7 903.5,366.0 905.0,367.8 906.5,367.3 908.0,367.7 909.5,367.6 910.0,367.5 911.0,359.8 912.0,354.7 912.5,354.6 914.0,355.9 915.0,356.2 915.5,356.6 917.0,356.9 918.5,357.3 920.0,357.8 921.5,362.1 922.0,363.5 923.0,361.8 924.5,359.2 925.0,358.8 926.0,358.5 927.5,359.1 929.0,359.1 930.5,359.1 932.0,359.7 933.5,359.6 935.0,359.8 936.5,359.9 938.0,360.0 939.5,360.3 941.0,360.1 942.0,360.3 942.0,462.2 591.5,462.2" fill="#fcf0d9"/><polygon points="591.5,427.7 593.0,427.4 594.5,427.7 596.0,427.6 597.5,425.9 599.0,427.7 600.5,427.7 602.0,427.4 603.5,427.7 605.0,427.6 606.5,427.3 608.0,427.2 609.5,427.5 611.0,427.4 612.5,427.1 614.0,427.1 615.5,427.1 617.0,427.0 618.5,427.1 620.0,425.4 621.5,427.0 623.0,426.9 624.5,425.5 626.0,426.9 627.5,426.0 629.0,425.9 630.5,427.0 632.0,426.7 633.5,426.9 635.0,427.0 636.5,427.0 638.0,426.6 639.5,426.5 641.0,426.5 642.5,426.6 644.0,426.4 645.5,426.4 647.0,426.3 648.5,426.5 650.0,426.6 651.5,426.5 653.0,426.3 654.5,426.1 656.0,426.5 657.5,425.1 659.0,426.2 660.5,425.1 662.0,424.7 663.5,426.0 665.0,426.3 666.5,426.3 668.0,425.9 669.5,425.8 671.0,426.1 672.5,425.9 674.0,426.0 675.5,426.1 677.0,425.9 678.5,425.6 680.0,425.9 681.5,424.6 683.0,425.7 684.5,424.7 686.0,425.9 687.5,426.0 689.0,425.9 690.5,425.8 692.0,424.3 693.5,426.0 695.0,425.6 696.5,424.9 698.0,425.6 699.5,425.7 701.0,424.6 702.5,425.8 704.0,426.0 705.5,425.6 707.0,425.8 708.5,426.0 710.0,426.0 711.5,424.5 713.0,425.8 714.5,424.7 716.0,425.6 717.5,426.0 719.0,425.9 720.5,425.9 722.0,424.7 723.5,425.8 725.0,424.4 726.5,426.0 728.0,425.8 729.5,425.9 731.0,425.8 732.5,426.1 734.0,425.9 735.5,426.1 737.0,426.0 738.5,426.0 740.0,425.9 741.5,425.1 743.0,425.9 744.5,425.7 746.0,425.8 747.5,424.8 749.0,425.9 750.5,425.0 752.0,426.2 753.5,425.7 755.0,426.2 756.5,425.8 758.0,425.9 759.5,424.4 761.0,426.0 762.5,426.2 764.0,425.8 765.5,424.4 767.0,426.1 768.5,425.8 770.0,426.2 771.5,425.8 773.0,426.2 774.5,425.9 776.0,426.2 777.5,425.9 779.0,425.9 780.0,424.6 780.5,426.1 782.0,426.1 783.5,426.1 785.0,425.9 786.5,425.7 788.0,425.6 789.5,425.6 791.0,425.1 792.5,425.6 794.0,424.3 795.5,425.8 797.0,425.5 798.5,425.6 800.0,425.4 801.5,425.4 803.0,425.6 804.5,425.2 806.0,425.3 807.5,425.2 809.0,425.0 810.5,425.2 812.0,425.4 813.5,425.4 815.0,425.1 816.5,424.8 818.0,425.1 819.5,425.0 821.0,424.9 822.5,424.8 824.0,424.1 825.5,424.9 827.0,424.6 828.5,424.7 830.0,424.7 831.5,421.7 833.0,418.5 834.0,416.9 834.5,414.3 835.5,408.9 836.0,412.5 837.5,420.0 839.0,420.2 840.0,421.2 840.5,422.0 842.0,422.1 843.5,421.7 845.0,421.1 846.5,419.6 848.0,420.6 849.5,420.8 851.0,419.2 852.5,420.2 854.0,419.0 855.5,420.1 857.0,420.3 858.5,420.3 860.0,420.2 861.5,420.2 863.0,419.9 864.5,420.0 866.0,420.2 867.5,419.9 869.0,420.2 870.5,419.0 872.0,420.0 873.5,418.8 875.0,420.3 876.5,420.1 878.0,420.4 879.5,419.2 881.0,420.4 882.5,420.3 884.0,420.4 885.5,420.2 887.0,420.4 888.5,420.6 890.0,420.2 891.5,420.3 893.0,420.6 894.5,420.3 896.0,420.7 897.5,420.5 899.0,420.4 900.5,420.5 902.0,419.6 903.5,420.5 905.0,419.7 906.5,420.6 908.0,420.7 909.5,419.4 910.0,419.4 911.0,422.8 912.0,426.4 912.5,426.0 914.0,425.5 915.5,425.2 917.0,423.7 918.5,425.4 919.0,425.6 920.0,417.0 920.5,412.6 921.5,421.4 922.0,425.6 923.0,425.7 924.5,425.7 926.0,425.7 927.5,424.7 929.0,425.8 930.5,426.0 932.0,426.0 933.5,425.3 935.0,426.5 936.5,426.3 938.0,426.4 939.5,426.3 941.0,426.5 942.0,426.7 942.0,462.2 591.5,462.2" fill="#e3ecdf"/><line x1="591.5" x2="942" y1="329.5" y2="329.5" stroke="#000" stroke-opacity="0.09" stroke-width="1"/><line x1="591.5" x2="942" y1="362.5" y2="362.5" stroke="#000" stroke-opacity="0.09" stroke-width="1"/><line x1="591.5" x2="942" y1="395.5" y2="395.5" stroke="#000" stroke-opacity="0.09" stroke-width="1"/><line x1="591.5" x2="942" y1="428.5" y2="428.5" stroke="#000" stroke-opacity="0.09" stroke-width="1"/><line x1="591.5" x2="942" y1="462.5" y2="462.5" stroke="#000" stroke-opacity="0.09" stroke-width="1"/><line x1="639.5" x2="639.5" y1="326" y2="462.2" stroke="#000" stroke-opacity="0.09" stroke-width="1"/><line x1="697.5" x2="697.5" y1="326" y2="462.2" stroke="#000" stroke-opacity="0.09" stroke-width="1"/><line x1="756.5" x2="756.5" y1="326" y2="462.2" stroke="#000" stroke-opacity="0.09" stroke-width="1"/><line x1="814.5" x2="814.5" y1="326" y2="462.2" stroke="#000" stroke-opacity="0.09" stroke-width="1"/><line x1="873.5" x2="873.5" y1="326" y2="462.2" stroke="#000" stroke-opacity="0.09" stroke-width="1"/><line x1="931.5" x2="931.5" y1="326" y2="462.2" stroke="#000" stroke-opacity="0.09" stroke-width="1"/><line x1="591.5" x2="942" y1="326.2" y2="326.2" stroke="#1f78c1" stroke-width="1.3"/><polyline points="591.5,343.4 593.0,342.9 594.5,342.9 596.0,342.9 597.5,342.9 599.0,342.7 600.5,342.7 602.0,342.7 603.5,342.1 604.0,342.4 605.0,342.3 606.5,342.1 608.0,342.3 609.5,341.6 611.0,341.6 612.0,341.4 612.5,341.3 614.0,341.6 615.5,341.4 617.0,341.5 618.5,337.9 618.7,337.4 620.0,339.6 620.5,340.1 621.5,340.4 623.0,339.7 624.5,339.9 626.0,338.9 627.5,339.7 629.0,338.9 630.5,340.0 632.0,340.3 633.5,340.4 635.0,339.9 636.5,340.7 638.0,340.6 639.5,340.7 641.0,340.8 642.5,340.3 644.0,340.5 645.5,340.3 646.0,340.4 647.0,337.6 647.5,336.4 648.5,338.8 649.0,339.5 650.0,338.0 651.5,339.4 653.0,339.1 654.5,338.3 656.0,339.3 657.5,337.7 658.0,339.0 659.0,340.3 660.5,341.9 662.0,343.2 663.5,343.5 665.0,342.9 666.5,342.7 668.0,342.6 669.5,342.8 671.0,341.8 672.5,342.3 674.0,342.4 675.5,342.0 677.0,342.2 678.0,342.1 678.5,341.3 680.0,340.6 681.5,340.6 683.0,340.3 684.5,340.1 686.0,339.9 687.5,340.2 689.0,338.5 690.5,339.8 692.0,340.2 693.5,338.6 695.0,339.6 696.5,340.3 698.0,340.8 699.5,341.4 701.0,342.3 701.7,342.2 702.5,342.0 704.0,341.8 705.5,341.6 707.0,341.1 708.0,341.1 708.5,339.2 710.0,340.9 711.5,340.8 713.0,340.5 714.5,340.7 716.0,339.1 717.5,340.2 719.0,339.0 720.5,339.7 722.0,339.9 723.4,339.5 723.5,339.8 725.0,339.1 726.5,338.3 728.0,336.8 729.2,337.7 729.5,338.0 731.0,338.0 731.6,339.6 732.5,339.3 734.0,339.2 735.5,338.8 737.0,338.9 738.5,338.5 739.2,338.3 740.0,341.9 741.5,346.7 743.0,347.9 744.5,347.2 746.0,347.4 747.5,347.1 748.0,346.9 749.0,347.3 750.5,347.2 752.0,347.3 753.5,347.8 755.0,347.2 756.0,347.5 756.5,345.5 758.0,347.1 759.5,346.9 761.0,346.5 762.5,346.1 764.0,346.1 765.5,345.7 767.0,345.5 768.5,344.9 770.0,345.2 771.5,345.1 773.0,346.0 774.5,344.5 776.0,347.1 777.5,347.0 779.0,347.5 779.6,347.7 780.5,347.7 782.0,347.0 783.5,346.8 785.0,346.9 786.5,346.1 788.0,346.0 789.5,344.7 791.0,345.7 792.5,345.0 793.7,345.0 794.0,343.5 795.5,345.0 797.0,345.7 797.2,345.7 798.5,341.5 799.2,339.4 800.0,339.3 801.5,339.2 803.0,337.6 804.5,338.9 806.0,338.9 807.5,338.7 809.0,337.7 810.5,337.2 812.0,337.0 813.5,338.1 815.0,338.4 816.5,337.8 817.0,338.0 818.0,338.0 819.5,338.1 821.0,338.7 822.5,338.8 824.0,339.2 825.5,339.4 827.0,339.1 828.5,338.4 830.0,338.0 831.5,339.6 833.0,339.8 833.2,340.0 834.5,342.1 835.6,343.5 836.0,342.2 837.5,337.5 838.0,337.5 839.0,337.4 840.5,338.1 842.0,338.3 842.8,338.4 843.5,339.7 845.0,342.9 846.0,345.1 846.5,345.7 848.0,346.3 849.3,346.9 849.5,346.4 851.0,343.5 852.5,343.1 854.0,342.6 855.5,341.8 857.0,341.3 858.5,339.3 860.0,340.0 860.6,340.1 861.5,340.2 863.0,340.2 864.5,338.8 866.0,340.3 867.5,340.1 869.0,340.2 870.5,339.5 872.0,338.9 873.5,340.2 875.0,340.5 876.5,340.4 878.0,340.3 879.5,339.5 881.0,340.8 882.5,340.8 884.0,339.1 885.5,340.8 887.0,341.0 888.5,341.3 890.0,340.8 891.2,340.9 891.5,340.8 893.0,340.8 894.5,340.5 896.0,340.3 897.5,339.9 899.0,340.8 900.5,340.6 902.0,340.2 903.5,338.6 905.0,340.4 906.5,340.1 908.0,340.2 909.5,340.2 910.5,340.1 911.0,337.6 912.0,336.4 912.5,336.5 913.7,338.0 914.0,338.1 915.5,338.7 917.0,338.5 918.5,339.0 920.0,339.2 920.2,339.3 921.5,343.9 921.8,345.0 923.0,342.9 924.5,340.5 925.8,339.1 926.0,338.8 927.5,339.4 929.0,339.2 930.5,339.5 932.0,340.0 933.5,340.1 935.0,340.5 936.5,340.5 938.0,340.8 939.5,340.9 941.0,340.6 942.0,341.1" fill="none" stroke="#e24d42" stroke-width="1.1"/><polyline points="591.5,351.3 593.0,351.0 594.5,350.6 596.0,351.0 597.5,351.0 599.0,350.6 600.5,350.4 602.0,350.9 603.5,350.3 605.0,350.5 606.5,350.2 608.0,350.5 609.5,350.0 611.0,350.3 612.5,350.0 614.0,350.2 615.5,350.0 617.0,350.0 618.5,346.4 618.7,346.3 620.0,348.0 620.5,348.5 621.5,348.7 623.0,348.3 624.5,348.4 626.0,347.5 627.5,348.1 629.0,347.3 630.5,348.3 632.0,348.7 633.5,348.7 635.0,348.4 636.5,348.7 638.0,348.0 639.5,348.2 641.0,348.2 642.5,348.1 644.0,348.2 645.5,348.2 646.0,348.3 647.0,347.1 647.5,346.7 648.5,348.0 649.0,348.5 650.0,346.9 651.5,348.5 653.0,348.3 654.5,347.4 656.0,348.7 657.5,347.4 658.0,348.5 659.0,349.7 660.5,351.2 662.0,352.1 663.5,352.6 665.0,352.1 666.5,351.9 668.0,351.9 669.5,352.4 671.0,351.3 672.5,351.9 674.0,352.4 675.5,351.7 677.0,351.8 678.5,351.7 680.0,351.8 681.5,351.9 683.0,351.6 684.5,351.5 685.0,351.7 686.0,351.2 687.5,351.4 689.0,349.3 690.5,350.8 692.0,350.7 693.5,349.2 695.0,350.1 696.5,350.7 698.0,351.4 699.5,352.1 701.0,353.0 701.7,353.0 702.5,352.7 704.0,352.7 705.5,352.7 707.0,352.6 708.5,350.7 710.0,352.6 711.5,352.2 713.0,352.2 714.5,352.3 716.0,351.0 717.5,352.2 719.0,351.0 720.5,351.4 722.0,352.0 723.5,351.9 725.0,351.7 726.5,351.1 728.0,350.0 729.5,351.1 731.0,349.8 732.5,350.9 734.0,351.0 735.5,350.5 737.0,350.8 738.5,350.6 739.2,350.5 740.0,354.1 741.5,358.8 743.0,360.2 744.5,359.8 746.0,360.0 747.5,359.4 748.0,359.7 749.0,359.8 750.5,359.5 752.0,359.0 753.5,359.3 755.0,358.6 756.5,357.0 758.0,358.7 759.5,358.5 761.0,358.3 762.5,358.0 764.0,358.2 765.5,357.7 767.0,357.6 768.5,357.4 770.0,357.5 771.5,357.7 773.0,358.6 774.5,357.0 776.0,359.7 777.5,359.4 779.0,360.2 779.6,360.3 780.5,360.2 782.0,360.0 783.5,359.8 785.0,360.1 786.5,359.3 788.0,359.1 789.5,357.9 791.0,359.1 792.5,358.6 794.0,357.2 795.5,358.2 797.0,358.2 798.5,354.1 799.2,352.5 800.0,352.5 801.5,352.6 803.0,351.0 804.5,352.5 806.0,353.0 807.5,352.7 809.0,352.0 810.5,351.5 812.0,351.6 813.5,352.7 815.0,353.1 816.5,353.0 818.0,353.1 819.5,353.1 821.0,353.5 822.5,353.5 824.0,353.8 825.5,353.8 827.0,353.5 828.5,352.7 830.0,352.0 831.5,353.6 833.0,353.6 834.0,348.0 834.5,348.0 836.0,346.3 837.0,345.9 837.5,348.4 838.5,356.9 839.0,358.6 840.0,362.7 840.5,363.1 842.0,363.3 843.5,364.0 845.0,365.2 846.5,367.0 847.0,367.6 848.0,366.2 849.5,363.8 850.0,363.5 851.0,361.2 852.0,358.7 852.5,358.8 854.0,358.3 855.5,357.7 857.0,357.1 858.5,355.3 860.0,356.2 861.5,356.5 863.0,356.2 864.5,354.8 866.0,356.2 867.5,356.0 869.0,355.6 870.5,354.8 872.0,354.2 873.5,355.5 875.0,355.6 876.5,355.5 878.0,355.0 879.5,354.1 881.0,355.3 882.5,355.3 884.0,353.3 885.5,354.8 887.0,354.8 888.5,355.1 890.0,354.4 891.5,354.3 893.0,354.5 894.5,354.3 896.0,354.2 897.5,353.4 899.0,354.2 900.5,354.2 902.0,353.9 903.5,352.3 905.0,354.3 906.5,353.8 908.0,353.9 909.5,354.1 910.0,353.9 911.0,346.6 912.0,341.8 912.5,341.6 914.0,342.6 915.0,342.7 915.5,343.0 917.0,343.1 918.5,343.5 920.0,343.9 921.5,345.5 922.0,345.9 923.0,345.8 924.5,346.3 925.0,346.7 926.0,346.5 927.5,347.1 929.0,346.9 930.5,347.0 932.0,347.4 933.5,347.4 935.0,347.9 936.5,348.0 938.0,348.0 939.5,348.0 941.0,348.1 942.0,348.3" fill="none" stroke="#ef843c" stroke-width="1.1"/><polyline points="591.5,357.0 593.0,356.8 594.5,356.7 596.0,356.9 597.5,356.9 599.0,356.7 600.5,356.5 602.0,356.6 603.5,356.2 605.0,356.5 606.5,356.3 608.0,356.6 609.5,356.0 611.0,356.2 612.5,356.0 614.0,356.2 615.5,355.7 617.0,356.0 618.5,352.5 618.7,352.2 620.0,354.3 620.5,354.9 621.5,355.0 623.0,354.6 624.5,354.7 626.0,353.8 627.5,354.5 629.0,353.5 630.5,354.9 632.0,355.1 633.5,355.1 635.0,354.7 636.5,355.0 638.0,354.6 639.5,354.7 641.0,354.8 642.5,354.6 644.0,354.8 645.5,354.7 646.0,354.7 647.0,353.3 647.5,352.9 648.5,354.3 649.0,354.7 650.0,353.3 651.5,354.8 653.0,354.8 654.5,353.9 656.0,355.3 657.5,353.9 658.0,354.9 659.0,356.3 660.5,357.6 662.0,358.8 663.5,359.3 665.0,358.6 666.5,358.6 668.0,358.4 669.5,358.9 671.0,357.6 672.5,358.3 674.0,358.5 675.5,357.9 677.0,358.2 678.5,357.9 680.0,357.9 681.5,357.8 683.0,357.5 684.5,357.4 685.0,357.6 686.0,357.5 687.5,358.1 689.0,356.2 690.5,358.1 692.0,358.6 693.5,357.4 695.0,358.8 696.5,358.7 698.0,358.9 699.5,359.4 701.0,359.8 701.7,359.6 702.5,359.2 704.0,359.3 705.5,359.3 707.0,358.9 708.5,357.2 710.0,359.0 711.5,358.7 713.0,358.8 714.5,358.8 716.0,357.5 717.5,358.7 719.0,357.6 720.5,358.0 722.0,358.7 723.5,358.4 725.0,358.2 726.5,358.0 728.0,356.7 729.5,358.1 731.0,356.7 732.5,357.7 734.0,357.6 735.5,357.2 737.0,357.4 738.5,357.4 739.2,357.4 740.0,360.6 741.5,364.8 743.0,366.2 744.5,365.9 746.0,366.0 747.5,365.7 749.0,365.8 750.5,365.5 752.0,365.2 753.5,365.7 755.0,365.0 756.5,363.0 758.0,365.0 759.5,364.7 761.0,364.6 762.5,364.1 764.0,364.4 765.5,364.1 767.0,364.0 768.5,363.7 770.0,363.9 771.5,364.0 773.0,365.0 774.5,363.1 776.0,366.0 777.5,365.5 779.0,366.4 779.6,366.6 780.5,366.4 782.0,366.0 783.5,365.8 785.0,366.0 786.5,365.5 788.0,365.5 789.5,364.4 791.0,365.5 792.5,364.9 794.0,363.3 795.5,364.5 797.0,364.7 798.5,359.9 799.0,358.8 800.0,358.7 801.5,359.1 803.0,357.2 804.5,359.0 806.0,359.1 807.5,359.0 809.0,358.0 810.5,358.0 812.0,357.9 813.5,359.0 815.0,359.6 816.5,359.4 818.0,359.4 819.5,359.5 821.0,359.9 822.5,359.9 824.0,360.2 825.5,360.3 827.0,359.7 828.5,359.0 830.0,358.5 831.5,360.1 833.0,360.1 834.0,354.5 834.5,353.6 836.0,349.7 837.5,361.4 838.0,366.8 839.0,368.2 840.0,369.9 840.5,370.1 842.0,370.2 843.5,370.3 845.0,370.9 846.5,374.1 848.0,371.7 849.5,368.8 850.0,368.4 851.0,367.2 852.5,365.1 853.0,364.2 854.0,364.5 855.5,363.6 857.0,363.5 858.5,361.5 860.0,362.5 861.5,363.0 863.0,362.7 864.5,361.1 866.0,362.5 867.5,362.5 869.0,362.0 870.5,361.5 872.0,361.0 873.5,362.1 875.0,362.1 876.5,362.3 878.0,362.0 879.5,361.0 881.0,362.0 882.5,362.2 884.0,360.2 885.5,361.9 887.0,361.7 888.5,362.1 890.0,361.7 891.5,361.4 893.0,361.5 894.5,361.3 896.0,361.2 897.5,360.5 899.0,361.6 900.5,361.3 902.0,361.0 903.5,359.3 905.0,361.3 906.5,360.9 908.0,361.1 909.5,361.0 910.0,361.1 911.0,352.4 912.0,346.5 912.5,346.8 914.0,348.4 915.0,349.0 915.5,349.4 917.0,349.4 918.5,350.2 920.0,350.7 921.5,354.2 922.0,355.4 923.0,354.2 924.5,352.5 925.0,352.1 926.0,352.0 927.5,352.7 929.0,352.4 930.5,352.6 932.0,353.2 933.5,353.0 935.0,353.5 936.5,353.6 938.0,353.5 939.5,353.8 941.0,353.7 942.0,353.8" fill="none" stroke="#6ed0e0" stroke-width="1.1"/><polyline points="591.5,362.9 593.0,362.8 594.5,362.5 596.0,362.7 597.5,362.9 599.0,362.7 600.5,362.4 602.0,362.6 603.5,362.1 605.0,362.5 606.5,362.4 608.0,362.7 609.5,362.1 611.0,362.3 612.5,362.1 614.0,362.1 615.5,361.9 617.0,362.0 618.5,358.8 618.7,358.3 620.0,360.3 620.5,360.8 621.5,361.0 623.0,360.6 624.5,360.6 626.0,359.8 627.5,360.6 629.0,359.5 630.5,360.6 632.0,361.2 633.5,361.2 635.0,360.8 636.5,361.1 638.0,360.6 639.5,360.8 641.0,360.8 642.5,360.4 644.0,360.8 645.5,360.5 646.0,360.9 647.0,359.4 647.5,359.0 648.5,360.5 649.0,360.8 650.0,359.4 651.5,360.8 653.0,360.7 654.5,360.0 656.0,361.1 657.5,359.7 658.0,361.0 659.0,362.1 660.5,363.7 662.0,365.0 663.5,365.2 665.0,364.6 666.5,364.6 668.0,364.4 669.5,364.8 671.0,363.6 672.5,364.3 674.0,364.6 675.5,364.1 677.0,364.1 678.5,363.9 680.0,364.1 681.5,364.2 683.0,363.9 684.5,363.8 685.0,363.8 686.0,363.7 687.5,364.2 689.0,362.7 690.5,364.4 692.0,364.9 693.5,363.8 695.0,365.0 696.5,365.2 698.0,365.3 699.5,365.6 701.0,366.0 701.7,365.9 702.5,365.6 704.0,365.5 705.5,365.5 707.0,365.5 708.5,363.5 710.0,365.4 711.5,365.2 713.0,365.1 714.5,365.4 716.0,363.9 717.5,365.1 719.0,363.7 720.5,364.3 722.0,364.9 723.5,364.7 725.0,364.4 726.5,364.1 728.0,363.0 729.5,364.2 731.0,362.7 732.5,363.6 734.0,364.0 735.5,363.4 737.0,363.6 738.5,363.3 739.2,363.4 740.0,367.2 741.5,372.1 743.0,373.6 744.5,373.2 746.0,373.3 747.5,373.0 749.0,373.2 750.5,372.9 752.0,372.5 753.5,372.8 755.0,372.2 756.5,370.4 758.0,371.9 759.5,371.9 761.0,371.6 762.5,371.4 764.0,371.6 765.5,371.1 767.0,371.2 768.5,370.9 770.0,370.9 771.5,371.2 773.0,372.0 774.5,370.3 776.0,372.8 777.5,372.7 779.0,373.4 779.6,373.7 780.5,373.5 782.0,373.1 783.5,373.1 785.0,373.2 786.5,372.7 788.0,372.8 789.5,371.5 791.0,372.6 792.5,372.0 794.0,370.6 795.5,371.8 797.0,371.8 798.5,367.9 799.0,366.7 800.0,366.6 801.5,366.9 803.0,365.2 804.5,366.8 806.0,367.0 807.5,366.8 809.0,365.6 810.5,365.3 812.0,365.4 813.5,366.3 815.0,366.7 816.5,366.5 818.0,366.6 819.5,366.6 821.0,367.1 822.5,366.9 824.0,367.1 825.5,367.0 827.0,366.5 828.5,365.8 830.0,365.1 831.5,366.5 833.0,366.5 834.0,361.9 834.5,361.5 836.0,358.6 837.5,368.3 838.0,372.9 839.0,380.2 840.5,380.9 842.0,381.0 843.5,380.7 845.0,380.8 846.0,380.5 846.5,380.1 848.0,378.3 849.0,377.2 849.5,375.9 851.0,372.4 852.5,372.2 854.0,372.0 855.5,371.0 857.0,370.7 858.5,369.1 860.0,370.0 861.5,370.2 863.0,369.8 864.5,368.5 866.0,369.8 867.5,369.7 869.0,369.4 870.5,368.7 872.0,368.0 873.5,369.0 875.0,369.1 876.5,369.1 878.0,368.8 879.5,367.7 881.0,368.8 882.5,368.9 884.0,367.0 885.5,368.5 887.0,368.7 888.5,368.7 890.0,368.0 891.5,367.9 893.0,368.2 894.5,367.8 896.0,367.8 897.5,367.0 899.0,367.9 900.5,368.1 902.0,367.7 903.5,366.0 905.0,367.8 906.5,367.3 908.0,367.7 909.5,367.6 910.0,367.5 911.0,359.8 912.0,354.7 912.5,354.6 914.0,355.9 915.0,356.2 915.5,356.6 917.0,356.9 918.5,357.3 920.0,357.8 921.5,362.1 922.0,363.5 923.0,361.8 924.5,359.2 925.0,358.8 926.0,358.5 927.5,359.1 929.0,359.1 930.5,359.1 932.0,359.7 933.5,359.6 935.0,359.8 936.5,359.9 938.0,360.0 939.5,360.3 941.0,360.1 942.0,360.3" fill="none" stroke="#eab839" stroke-width="1.1"/><polyline points="591.5,427.7 593.0,427.4 594.5,427.7 596.0,427.6 597.5,425.9 599.0,427.7 600.5,427.7 602.0,427.4 603.5,427.7 605.0,427.6 606.5,427.3 608.0,427.2 609.5,427.5 611.0,427.4 612.5,427.1 614.0,427.1 615.5,427.1 617.0,427.0 618.5,427.1 620.0,425.4 621.5,427.0 623.0,426.9 624.5,425.5 626.0,426.9 627.5,426.0 629.0,425.9 630.5,427.0 632.0,426.7 633.5,426.9 635.0,427.0 636.5,427.0 638.0,426.6 639.5,426.5 641.0,426.5 642.5,426.6 644.0,426.4 645.5,426.4 647.0,426.3 648.5,426.5 650.0,426.6 651.5,426.5 653.0,426.3 654.5,426.1 656.0,426.5 657.5,425.1 659.0,426.2 660.5,425.1 662.0,424.7 663.5,426.0 665.0,426.3 666.5,426.3 668.0,425.9 669.5,425.8 671.0,426.1 672.5,425.9 674.0,426.0 675.5,426.1 677.0,425.9 678.5,425.6 680.0,425.9 681.5,424.6 683.0,425.7 684.5,424.7 686.0,425.9 687.5,426.0 689.0,425.9 690.5,425.8 692.0,424.3 693.5,426.0 695.0,425.6 696.5,424.9 698.0,425.6 699.5,425.7 701.0,424.6 702.5,425.8 704.0,426.0 705.5,425.6 707.0,425.8 708.5,426.0 710.0,426.0 711.5,424.5 713.0,425.8 714.5,424.7 716.0,425.6 717.5,426.0 719.0,425.9 720.5,425.9 722.0,424.7 723.5,425.8 725.0,424.4 726.5,426.0 728.0,425.8 729.5,425.9 731.0,425.8 732.5,426.1 734.0,425.9 735.5,426.1 737.0,426.0 738.5,426.0 740.0,425.9 741.5,425.1 743.0,425.9 744.5,425.7 746.0,425.8 747.5,424.8 749.0,425.9 750.5,425.0 752.0,426.2 753.5,425.7 755.0,426.2 756.5,425.8 758.0,425.9 759.5,424.4 761.0,426.0 762.5,426.2 764.0,425.8 765.5,424.4 767.0,426.1 768.5,425.8 770.0,426.2 771.5,425.8 773.0,426.2 774.5,425.9 776.0,426.2 777.5,425.9 779.0,425.9 780.0,424.6 780.5,426.1 782.0,426.1 783.5,426.1 785.0,425.9 786.5,425.7 788.0,425.6 789.5,425.6 791.0,425.1 792.5,425.6 794.0,424.3 795.5,425.8 797.0,425.5 798.5,425.6 800.0,425.4 801.5,425.4 803.0,425.6 804.5,425.2 806.0,425.3 807.5,425.2 809.0,425.0 810.5,425.2 812.0,425.4 813.5,425.4 815.0,425.1 816.5,424.8 818.0,425.1 819.5,425.0 821.0,424.9 822.5,424.8 824.0,424.1 825.5,424.9 827.0,424.6 828.5,424.7 830.0,424.7 831.5,421.7 833.0,418.5 834.0,416.9 834.5,414.3 835.5,408.9 836.0,412.5 837.5,420.0 839.0,420.2 840.0,421.2 840.5,422.0 842.0,422.1 843.5,421.7 845.0,421.1 846.5,419.6 848.0,420.6 849.5,420.8 851.0,419.2 852.5,420.2 854.0,419.0 855.5,420.1 857.0,420.3 858.5,420.3 860.0,420.2 861.5,420.2 863.0,419.9 864.5,420.0 866.0,420.2 867.5,419.9 869.0,420.2 870.5,419.0 872.0,420.0 873.5,418.8 875.0,420.3 876.5,420.1 878.0,420.4 879.5,419.2 881.0,420.4 882.5,420.3 884.0,420.4 885.5,420.2 887.0,420.4 888.5,420.6 890.0,420.2 891.5,420.3 893.0,420.6 894.5,420.3 896.0,420.7 897.5,420.5 899.0,420.4 900.5,420.5 902.0,419.6 903.5,420.5 905.0,419.7 906.5,420.6 908.0,420.7 909.5,419.4 910.0,419.4 911.0,422.8 912.0,426.4 912.5,426.0 914.0,425.5 915.5,425.2 917.0,423.7 918.5,425.4 919.0,425.6 920.0,417.0 920.5,412.6 921.5,421.4 922.0,425.6 923.0,425.7 924.5,425.7 926.0,425.7 927.5,424.7 929.0,425.8 930.5,426.0 932.0,426.0 933.5,425.3 935.0,426.5 936.5,426.3 938.0,426.4 939.5,426.3 941.0,426.5 942.0,426.7" fill="none" stroke="#7eb26d" stroke-width="1.1"/><line x1="704.5" x2="704.5" y1="325" y2="462.2" stroke="#b3161f" stroke-width="1"/></svg><div class="t" style="right:438.5px;transform-origin:right center;top:322.74px;font-size:12px;color:#464c54;font-weight:normal;">954 MiB</div><div class="t" style="right:438.5px;transform-origin:right center;top:355.74px;font-size:12px;color:#464c54;font-weight:normal;">715 MiB</div><div class="t" style="right:438.5px;transform-origin:right center;top:389.04px;font-size:12px;color:#464c54;font-weight:normal;">477 MiB</div><div class="t" style="right:438.5px;transform-origin:right center;top:421.84px;font-size:12px;color:#464c54;font-weight:normal;">238 MiB</div><div class="t" style="right:438.5px;transform-origin:right center;top:455.84px;font-size:12px;color:#464c54;font-weight:normal;">0 B</div><div class="t" style="left:639.4px;transform:translateX(-50%);top:468.84px;font-size:12px;color:#464c54;font-weight:normal;">00:00</div><div class="t" style="left:697.3px;transform:translateX(-50%);top:468.84px;font-size:12px;color:#464c54;font-weight:normal;">04:00</div><div class="t" style="left:756.2px;transform:translateX(-50%);top:468.84px;font-size:12px;color:#464c54;font-weight:normal;">08:00</div><div class="t" style="left:814.4px;transform:translateX(-50%);top:468.84px;font-size:12px;color:#464c54;font-weight:normal;">12:00</div><div class="t" style="left:873.4px;transform:translateX(-50%);top:468.84px;font-size:12px;color:#464c54;font-weight:normal;">16:00</div><div class="t" style="left:931.5px;transform:translateX(-50%);top:468.84px;font-size:12px;color:#464c54;font-weight:normal;">20:00</div><div style="position:absolute;left:549px;top:498.1px;width:14px;height:4px;background:#7eb26d;border-radius:1px"></div><div class="t" style="left:572px;transform-origin:left center;top:493.44px;font-size:12px;color:#464c54;font-weight:normal;">memory:memory-used:value</div><div style="position:absolute;left:737px;top:498.1px;width:14px;height:4px;background:#eab839;border-radius:1px"></div><div class="t" style="left:760px;transform-origin:left center;top:493.44px;font-size:12px;color:#464c54;font-weight:normal;">memory:memory-cached:value</div><div style="position:absolute;left:549px;top:515.3px;width:14px;height:4px;background:#6ed0e0;border-radius:1px"></div><div class="t" style="left:572px;transform-origin:left center;top:510.64px;font-size:12px;color:#464c54;font-weight:normal;">memory:memory-slab_recl:value</div><div style="position:absolute;left:549px;top:534.0px;width:14px;height:4px;background:#ef843c;border-radius:1px"></div><div class="t" style="left:572px;transform-origin:left center;top:529.34px;font-size:12px;color:#464c54;font-weight:normal;">memory:memory-slab_unrecl:value</div><div style="position:absolute;left:549px;top:551.8px;width:14px;height:4px;background:#e24d42;border-radius:1px"></div><div class="t" style="left:572px;transform-origin:left center;top:547.14px;font-size:12px;color:#464c54;font-weight:normal;">memory:memory-buffered:value</div><div style="position:absolute;left:757px;top:551.8px;width:14px;height:4px;background:#1f78c1;border-radius:1px"></div><div class="t" style="left:780px;transform-origin:left center;top:547.14px;font-size:12px;color:#464c54;font-weight:normal;">memory:memory-free:value</div><svg style="position:absolute;left:0;top:0" width="1024" height="768"><rect x="148" y="719.6" width="351" height="60" fill="#e3ecdf"/><line x1="148" x2="499" y1="640.5" y2="640.5" stroke="#000" stroke-opacity="0.1" stroke-width="1"/><line x1="148" x2="499" y1="685.5" y2="685.5" stroke="#000" stroke-opacity="0.1" stroke-width="1"/><line x1="148" x2="499" y1="730.5" y2="730.5" stroke="#000" stroke-opacity="0.1" stroke-width="1"/><line x1="196.5" x2="196.5" y1="629" y2="768" stroke="#000" stroke-opacity="0.1" stroke-width="1"/><line x1="254.5" x2="254.5" y1="629" y2="768" stroke="#000" stroke-opacity="0.1" stroke-width="1"/><line x1="313.5" x2="313.5" y1="629" y2="768" stroke="#000" stroke-opacity="0.1" stroke-width="1"/><line x1="371.5" x2="371.5" y1="629" y2="768" stroke="#000" stroke-opacity="0.1" stroke-width="1"/><line x1="430.5" x2="430.5" y1="629" y2="768" stroke="#000" stroke-opacity="0.1" stroke-width="1"/><line x1="488.5" x2="488.5" y1="629" y2="768" stroke="#000" stroke-opacity="0.1" stroke-width="1"/><polyline points="148,719.6 390,719.6 392,719 404,719 406,719.6 499,719.6" fill="none" stroke="#72a862" stroke-width="1"/><line x1="261.5" x2="261.5" y1="629" y2="768" stroke="#b3161f" stroke-width="1"/></svg><div class="t" style="right:881px;transform-origin:right center;transform: scaleX(0.9678);top:634.54px;font-size:12px;color:#464c54;font-weight:normal;">37.3 GiB</div><div class="t" style="right:881px;transform-origin:right center;transform: scaleX(0.9678);top:679.24px;font-size:12px;color:#464c54;font-weight:normal;">27.9 GiB</div><div class="t" style="right:881px;transform-origin:right center;transform: scaleX(0.9678);top:724.24px;font-size:12px;color:#464c54;font-weight:normal;">18.6 GiB</div><svg style="position:absolute;left:0;top:0" width="1024" height="768"><line x1="587" x2="942" y1="629.5" y2="629.5" stroke="#000" stroke-opacity="0.1" stroke-width="1"/><line x1="587" x2="942" y1="667.5" y2="667.5" stroke="#000" stroke-opacity="0.1" stroke-width="1"/><line x1="587" x2="942" y1="705.5" y2="705.5" stroke="#000" stroke-opacity="0.1" stroke-width="1"/><line x1="587" x2="942" y1="743.5" y2="743.5" stroke="#000" stroke-opacity="0.1" stroke-width="1"/><line x1="635.5" x2="635.5" y1="629" y2="768" stroke="#000" stroke-opacity="0.1" stroke-width="1"/><line x1="695.5" x2="695.5" y1="629" y2="768" stroke="#000" stroke-opacity="0.1" stroke-width="1"/><line x1="754.5" x2="754.5" y1="629" y2="768" stroke="#000" stroke-opacity="0.1" stroke-width="1"/><line x1="813.5" x2="813.5" y1="629" y2="768" stroke="#000" stroke-opacity="0.1" stroke-width="1"/><line x1="872.5" x2="872.5" y1="629" y2="768" stroke="#000" stroke-opacity="0.1" stroke-width="1"/><line x1="931.5" x2="931.5" y1="629" y2="768" stroke="#000" stroke-opacity="0.1" stroke-width="1"/><polyline points="919.6,768 920.6,650.7 921.6,768" fill="#eab839" fill-opacity="0.4" stroke="#eab839" stroke-width="1"/><line x1="920.6" x2="920.6" y1="724" y2="768" stroke="#8fb870" stroke-width="1.2"/><polyline points="928.6,768 929.4,737.7 930.2,768" fill="#eab839" fill-opacity="0.4" stroke="#eab839" stroke-width="1"/><line x1="702.5" x2="702.5" y1="629" y2="768" stroke="#b3161f" stroke-width="1"/></svg><div class="t" style="right:442.5px;transform-origin:right center;top:623.14px;font-size:12px;color:#464c54;font-weight:normal;">100</div><div class="t" style="right:442.5px;transform-origin:right center;top:661.44px;font-size:12px;color:#464c54;font-weight:normal;">80</div><div class="t" style="right:442.5px;transform-origin:right center;top:699.34px;font-size:12px;color:#464c54;font-weight:normal;">60</div><div class="t" style="right:442.5px;transform-origin:right center;top:737.54px;font-size:12px;color:#464c54;font-weight:normal;">40</div><div class="t" style="left:548px;top:731px;font-size:13px;color:#464c54;transform:translate(-50%,-50%) rotate(-90deg);transform-origin:center">Packets/sec</div><svg style="position:absolute;left:15px;top:73px" width="18" height="18" viewBox="0 0 18 18"><g fill="none" stroke="#a4acb5" stroke-width="1.6"><rect x="2" y="2.5" width="14" height="9.5" rx="1" /><path d="M6 15 H12"/></g></svg><svg style="position:absolute;left:15px;top:109px" width="18" height="18" viewBox="0 0 18 18"><g fill="none" stroke="#a4acb5" stroke-width="1.6"><path d="M2.5 3 H7.5 L9 5 H15.5 V15 H2.5 Z M11 3 H15.5"/></g></svg><svg style="position:absolute;left:15px;top:145px" width="18" height="18" viewBox="0 0 18 18"><g fill="none" stroke="#a4acb5" stroke-width="1.6"><path d="M9 2 L16 5.8 L9 9.6 L2 5.8 Z M2 9 L9 12.8 L16 9 M2 12.2 L9 16 L16 12.2"/></g></svg><svg style="position:absolute;left:15px;top:181px" width="18" height="18" viewBox="0 0 18 18"><g fill="none" stroke="#a4acb5" stroke-width="1.6"><path d="M1.5 15.9 H16.5 M4.5 13.5 V6.2 M9 13.5 V8.5 M13.5 13.5 V1.8"/></g></svg><svg style="position:absolute;left:15px;top:217px" width="18" height="18" viewBox="0 0 18 18"><g fill="none" stroke="#a4acb5" stroke-width="1.6"><path d="M4.5 2 V16 M9 2 V16 M13.5 2 V16"/><circle cx="4.5" cy="6" r="1.8" fill="#394959"/><circle cx="9" cy="12" r="1.8" fill="#394959"/><circle cx="13.5" cy="8" r="1.8" fill="#394959"/></g></svg><svg style="position:absolute;left:15px;top:253px" width="18" height="18" viewBox="0 0 18 18"><g fill="none" stroke="#a4acb5" stroke-width="1.6"><rect x="2.5" y="2.5" width="5" height="5"/><rect x="2.5" y="10.5" width="5" height="5"/><rect x="10.5" y="2.5" width="5" height="9"/></g></svg><svg style="position:absolute;left:15px;top:289px" width="18" height="18" viewBox="0 0 18 18"><g fill="none" stroke="#a4acb5" stroke-width="1.6"><circle cx="8.3" cy="8.3" r="6.2"/><path d="M12.8 12.8 L16.3 16.3 M6.5 7.5 V10.5 M10 6.5 V10.5"/></g></svg><svg style="position:absolute;left:15px;top:325px" width="18" height="18" viewBox="0 0 18 18"><g fill="none" stroke="#a4acb5" stroke-width="1.6"><circle cx="9" cy="5.2" r="2.8"/><path d="M2.5 16 V14 Q2.5 10.5 6 10.5 H12 Q15.5 10.5 15.5 14 V16"/></g></svg><svg style="position:absolute;left:15px;top:361px" width="18" height="18" viewBox="0 0 18 18"><g fill="none" stroke="#a4acb5" stroke-width="1.6"><path d="M2.5 13 V5.5 L6 9 L9 3 L12 9 L15.5 5.5 V13"/><ellipse cx="9" cy="13.5" rx="6.5" ry="2.5"/></g></svg><svg style="position:absolute;left:15px;top:397px" width="18" height="18" viewBox="0 0 18 18"><g fill="none" stroke="#a4acb5" stroke-width="1.6"><circle cx="9" cy="9" r="7"/><path d="M4.2 6.5 L7 13.5 L9 8 L11 13.5 L13.8 6.5 M3.5 6.5 H6 M8 6.5 H10.5"/></g></svg><svg style="position:absolute;left:16px;top:742px" width="16" height="16" viewBox="0 0 16 16"><circle cx="8" cy="8" r="7" fill="none" stroke="#a4acb5" stroke-width="1.4"/><path d="M11.5 4.5 L9.2 9.2 L4.5 11.5 L6.8 6.8 Z" fill="#a4acb5"/></svg><svg style="position:absolute;left:35px;top:736px" width="10" height="10" viewBox="0 0 10 10"><path d="M1.5 1.5 L8.5 8.5 M8.5 1.5 L1.5 8.5" stroke="#2d9fd9" stroke-width="1.3"/></svg><div style="position:absolute;left:48px;top:340px;width:16px;height:88px;background:#e4e4e4;border-radius:0 5px 5px 0"></div><svg style="position:absolute;left:51px;top:379px" width="8" height="10" viewBox="0 0 8 10"><path d="M2 1.5 L5.5 5 L2 8.5" fill="none" stroke="#333" stroke-width="1.2"/></svg><div style="position:absolute;left:1007px;top:0px;width:17px;height:768px;background:#f1f1f1"></div><div style="position:absolute;left:1009px;top:17px;width:13px;height:573px;background:#c1c1c1"></div><svg style="position:absolute;left:1007px;top:0" width="17" height="17"><path d="M4.5 11 L8.5 7 L12.5 11 Z" fill="#a3a3a3"/></svg><svg style="position:absolute;left:1007px;top:751px" width="17" height="17"><path d="M4.5 6 L8.5 10 L12.5 6 Z" fill="#505050"/></svg>
</body></html>
